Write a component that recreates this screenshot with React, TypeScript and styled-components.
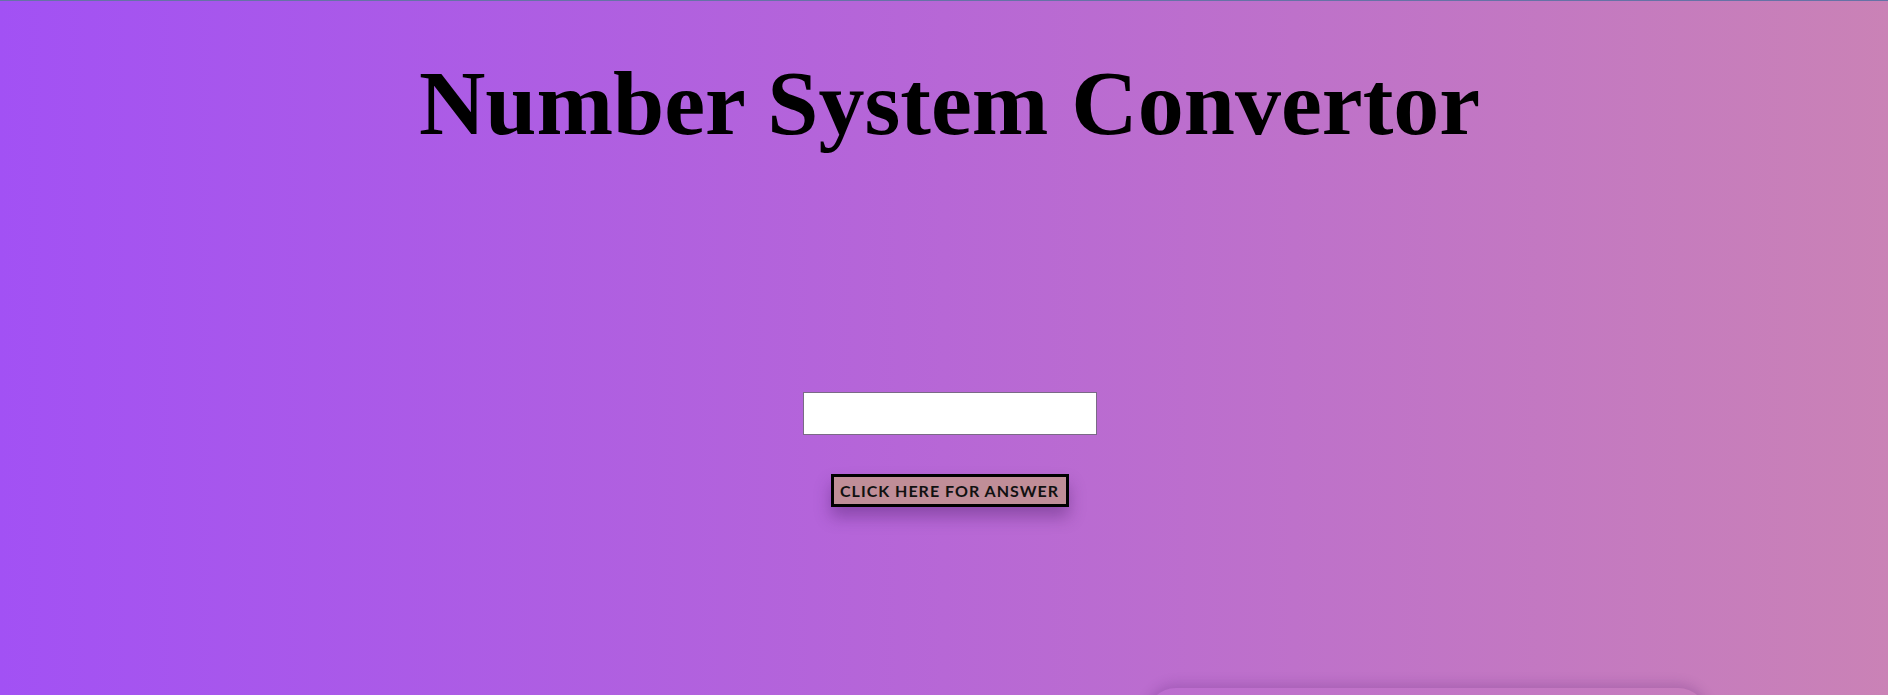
import styled, { createGlobalStyle } from "styled-components";

const GlobalStyle = createGlobalStyle`
    html, body {
        margin: 0;
        padding: 0;
    }

    body {
        min-height: 100vh;
        overflow: hidden;
        background: linear-gradient(to right, #a251f4, #b767d6 50%, #ca82b6);
        border-top: 1px solid #6672a6;
        font-family: "Liberation Serif", serif;
    }
`;

const Page = styled.div`
    display: flex;
    flex-direction: column;
    align-items: center;
    padding-left: 11px;
`;

const Title = styled.h1`
    margin: 50px 0 0;
    font-family: "Liberation Serif", serif;
    font-weight: 700;
    font-size: 92px;
    line-height: 1.15;
    color: #000;
`;

const NumberInput = styled.input`
    margin-top: 235px;
    width: 294px;
    height: 43px;
    box-sizing: border-box;
    border: 1px solid #7a6a86;
    background: #fff;
    padding: 0 8px;
    font-family: "Liberation Sans", sans-serif;
    font-size: 16px;
    outline: none;
`;

const AnswerButton = styled.button`
    margin-top: 39px;
    width: 238px;
    height: 33px;
    box-sizing: border-box;
    border: 3px solid #000;
    background: #c08e98;
    color: #111;
    font-family: Lato, sans-serif;
    font-weight: 700;
    font-size: 16px;
    letter-spacing: 1px;
    text-transform: uppercase;
    cursor: pointer;
    box-shadow: 0 10px 16px rgba(60, 20, 90, 0.35);
`;

const ResultRow = styled.div`
    display: flex;
    justify-content: flex-end;
    margin-top: 181px;
    padding-right: 180px;
`;

const ResultCard = styled.div`
    width: 562px;
    height: 220px;
    border-radius: 30px;
    box-shadow: 0 -4px 12px rgba(80, 30, 110, 0.22);
`;

export default function App() {
    return (
        <>
            <GlobalStyle />
            <Page>
                <Title>Number System Convertor</Title>
                <NumberInput type="text" />
                <AnswerButton>Click here for answer</AnswerButton>
            </Page>
            <ResultRow>
                <ResultCard />
            </ResultRow>
        </>
    );
}
